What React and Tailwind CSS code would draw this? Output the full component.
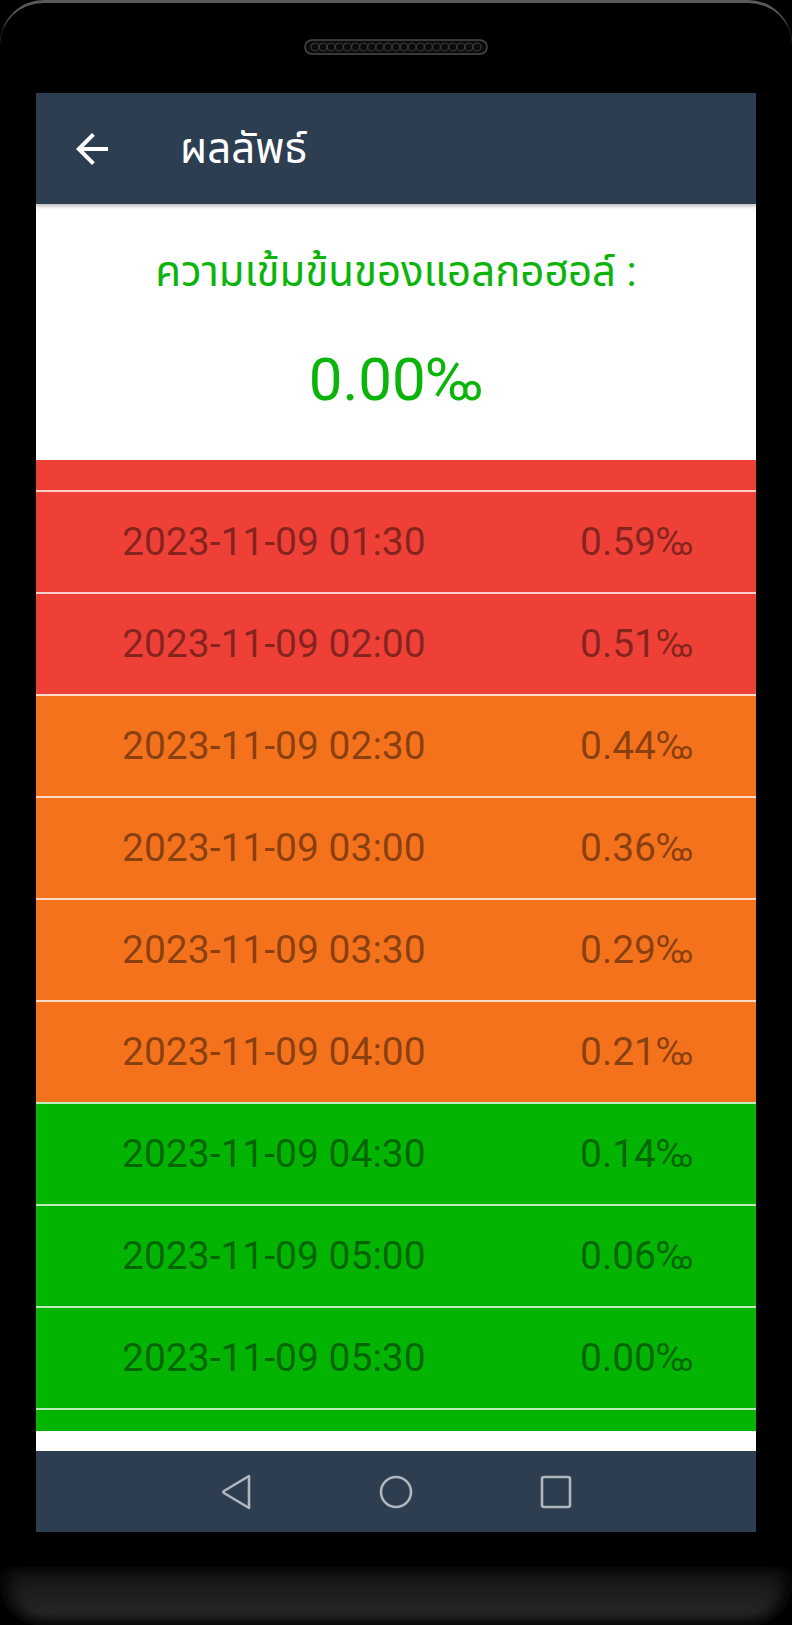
import React from "react";

const rows = [
  { t: "2023-11-09 01:30", v: "0.59‰", c: "bg-[#ee4036]" },
  { t: "2023-11-09 02:00", v: "0.51‰", c: "bg-[#ee4036]" },
  { t: "2023-11-09 02:30", v: "0.44‰", c: "bg-[#f5721d]" },
  { t: "2023-11-09 03:00", v: "0.36‰", c: "bg-[#f5721d]" },
  { t: "2023-11-09 03:30", v: "0.29‰", c: "bg-[#f5721d]" },
  { t: "2023-11-09 04:00", v: "0.21‰", c: "bg-[#f5721d]" },
  { t: "2023-11-09 04:30", v: "0.14‰", c: "bg-[#03b403]" },
  { t: "2023-11-09 05:00", v: "0.06‰", c: "bg-[#03b403]" },
  { t: "2023-11-09 05:30", v: "0.00‰", c: "bg-[#03b403]" },
];

function Grille() {
  const holes = [];
  for (let i = 0; i < 21; i++) {
    holes.push(
      <circle key={i} cx={11 + i * 8.1} cy={8} r={4} fill="none" stroke="#3a3a3a" strokeWidth="1.2" />
    );
  }
  return (
    <svg width="184" height="16" viewBox="0 0 184 16">
      <rect x="1" y="1" width="182" height="14" rx="7" fill="#0c0c0c" stroke="#4a4a4a" strokeWidth="1.5" />
      {holes}
    </svg>
  );
}

export default function App() {
  return (
    <div
      className="w-[792px] h-[1625px] bg-black flex flex-col overflow-hidden"
      style={{ fontFamily: 'Roboto, "Noto Sans", "Noto Sans Thai", sans-serif' }}
    >
      {/* top bezel */}
      <div className="h-[93px] rounded-t-[44px] border-t-[3px] border-[#5a5a5a] flex justify-center pt-[36px] shrink-0">
        <Grille />
      </div>

      {/* screen */}
      <div className="mx-[36px] w-[720px] flex flex-col shrink-0">
        {/* app bar */}
        <div className="h-[111px] bg-[#2c3e50] flex items-center relative z-10 shadow-[0_2px_4px_rgba(0,0,0,0.3)]">
          <div className="ml-[32px] w-[48px] h-[48px]">
            <svg width="48" height="48" viewBox="0 0 24 24" fill="#ffffff">
              <path d="M20 11H7.83l5.59-5.59L12 4l-8 8 8 8 1.41-1.41L7.83 13H20v-2z" />
            </svg>
          </div>
          <div className="ml-[64px] text-white text-[42px] leading-[48px]">ผลลัพธ์</div>
        </div>

        {/* header */}
        <div className="h-[256px] bg-white flex flex-col items-center">
          <div className="mt-[43px] text-[#0ab40a] text-[42px] leading-[50px]">ความเข้มข้นของแอลกอฮอล์ :</div>
          <div className="mt-[47px] text-[#0ab40a] text-[60px] leading-[72px]">0.00‰</div>
        </div>

        {/* list */}
        <div className="h-[30px] bg-[#ee4036]"></div>
        {rows.map((r) => (
          <div
            key={r.t}
            className={`h-[102px] border-t-2 border-white/75 ${r.c} flex items-center pl-[86px] text-black/45 text-[39px]`}
          >
            <span className="w-[458px]">{r.t}</span>
            <span>{r.v}</span>
          </div>
        ))}
        <div className="h-[23px] border-t-2 border-white/75 bg-[#03b403]"></div>
        <div className="h-[20px] bg-white"></div>

        {/* nav bar */}
        <div className="h-[81px] bg-[#2c3e50] flex items-center justify-center gap-[120px]">
          <div className="w-[40px] h-[40px] flex items-center justify-center">
            <svg width="32" height="36" viewBox="0 0 32 36">
              <path d="M29 2 L4 17 Q3 18 4 19 L29 34 Z" fill="none" stroke="#b1b6bc" strokeWidth="2.6" strokeLinejoin="round" />
            </svg>
          </div>
          <div className="w-[40px] h-[40px] flex items-center justify-center">
            <svg width="36" height="36" viewBox="0 0 36 36">
              <circle cx="18" cy="18" r="15" fill="none" stroke="#b1b6bc" strokeWidth="2.6" />
            </svg>
          </div>
          <div className="w-[40px] h-[40px] flex items-center justify-center">
            <svg width="32" height="34" viewBox="0 0 32 34">
              <rect x="2" y="2" width="28" height="30" rx="2" fill="none" stroke="#b1b6bc" strokeWidth="2.6" />
            </svg>
          </div>
        </div>
      </div>

      {/* bottom bezel */}
      <div className="h-[35px] shrink-0"></div>
      <div className="h-[58px] shrink-0 rounded-b-[40px] bg-gradient-to-b from-[#121212] to-[#2c2c2c] shadow-[inset_0_-6px_10px_rgba(0,0,0,0.5),inset_10px_0_14px_rgba(0,0,0,0.7),inset_-10px_0_14px_rgba(0,0,0,0.7)]"></div>
    </div>
  );
}
